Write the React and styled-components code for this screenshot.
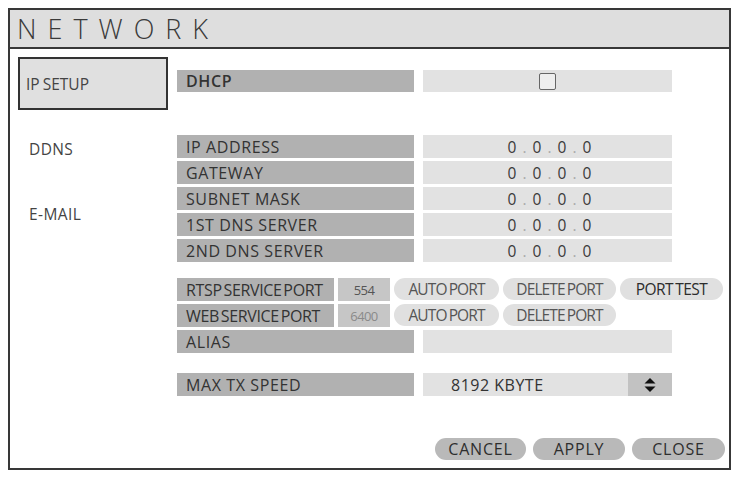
import React from "react";
import styled, { createGlobalStyle } from "styled-components";

const Global = createGlobalStyle`
  html, body { margin: 0; padding: 0; background: #fff; }
  body { font-family: "Open Sans", "Noto Sans", sans-serif; color: #333; }
`;

const Page = styled.div`
  padding: 8px;
`;

const Frame = styled.div`
  width: 723px;
  height: 462px;
  box-sizing: border-box;
  border: 2px solid #383838;
  display: flex;
  flex-direction: column;
  background: #fff;
`;

const TitleBar = styled.div`
  height: 37px;
  flex: none;
  background: #dedede;
  border-bottom: 2px solid #383838;
  display: flex;
  align-items: center;
  padding-left: 7px;
  font-size: 27px;
  font-weight: 300;
  letter-spacing: 11px;
  color: #3a3a3a;
`;

const Body = styled.div`
  flex: 1;
  display: flex;
`;

const Nav = styled.div`
  width: 150px;
  padding: 8px 0 0 8px;
  display: flex;
  flex-direction: column;
  gap: 12px;
`;

const NavItem = styled.div`
  height: 53px;
  box-sizing: border-box;
  display: flex;
  align-items: center;
  padding-left: ${(p) => (p.$active ? "6px" : "9px")};
  font-size: 15.5px;
  letter-spacing: ${(p) => (p.$active ? "0px" : "0.4px")};
  word-spacing: ${(p) => (p.$active ? "-1px" : "0")};
  color: #444;
  background: ${(p) => (p.$active ? "#e0e0e0" : "transparent")};
  border: 2px solid ${(p) => (p.$active ? "#333" : "transparent")};
`;

const Content = styled.div`
  flex: 1;
  margin-left: 9px;
  padding-top: 21px;
  display: flex;
  flex-direction: column;
`;

const Group = styled.div`
  display: flex;
  flex-direction: column;
  gap: ${(p) => p.$gap ?? 3}px;
  margin-top: ${(p) => p.$top ?? 0}px;
`;

const Row = styled.div`
  display: flex;
  height: ${(p) => p.$h ?? 23}px;
  gap: ${(p) => p.$gap ?? 9}px;
`;

const Label = styled.div`
  width: ${(p) => p.$w ?? 237}px;
  flex: none;
  background: #b1b1b1;
  display: flex;
  align-items: center;
  padding-left: 9px;
  box-sizing: border-box;
  font-size: 16px;
  letter-spacing: ${(p) => (p.$condensed ? "-0.35px" : "0.6px")};
  word-spacing: ${(p) => (p.$condensed ? "-2px" : "0")};
  font-weight: ${(p) => (p.$bold ? 600 : 400)};
  color: #333;
  white-space: nowrap;
`;

const Value = styled.div`
  width: 249px;
  flex: none;
  background: #e2e2e2;
  display: flex;
  align-items: center;
  justify-content: ${(p) => p.$justify ?? "center"};
  box-sizing: border-box;
  font-size: 15.5px;
  color: #3a3a3a;
`;

const Checkbox = styled.div`
  width: 15px;
  height: 15px;
  border: 1.5px solid #666;
  border-radius: 2px;
  background: #eee;
`;

const Ip = styled.span`
  letter-spacing: 0;
  margin-left: 4px;
`;

const Octet = styled.span`
  display: inline-block;
  width: 10px;
  text-align: center;
`;

const Dot = styled.span`
  display: inline-block;
  width: 15px;
  text-align: center;
  color: #aaa;
`;

const PortNum = styled.div`
  width: 52px;
  flex: none;
  background: #c6c6c6;
  display: flex;
  align-items: center;
  justify-content: center;
  font-size: 13px;
  letter-spacing: -0.6px;
  color: ${(p) => (p.$faint ? "#8a8a8a" : "#555")};
`;

const Pill = styled.div`
  width: ${(p) => p.$w}px;
  flex: none;
  height: 22px;
  border-radius: 11px;
  background: #e0e0e0;
  display: flex;
  align-items: center;
  justify-content: center;
  font-size: 15.5px;
  letter-spacing: ${(p) => (p.$dark ? "-0.6px" : "-0.9px")};
  word-spacing: -1px;
  color: ${(p) => (p.$dark ? "#2c2c2c" : "#555")};
  white-space: nowrap;
`;

const SpeedText = styled.span`
  flex: 1;
  padding-left: 28px;
  font-size: 16px;
  letter-spacing: 0.5px;
  color: #333;
`;

const Spinner = styled.div`
  width: 44px;
  align-self: stretch;
  background: #c2c2c2;
  display: flex;
  align-items: center;
  justify-content: center;
`;

const Footer = styled.div`
  margin-top: 42px;
  display: flex;
  justify-content: flex-end;
  gap: 7px;
  padding-right: 4px;
`;

const Button = styled.div`
  width: ${(p) => p.$w}px;
  height: 22px;
  border-radius: 11px;
  background: #b9b9b9;
  display: flex;
  align-items: center;
  justify-content: center;
  font-size: 16px;
  letter-spacing: 0.8px;
  color: #2e2e2e;
`;

const ipRows = ["IP ADDRESS", "GATEWAY", "SUBNET MASK", "1ST DNS SERVER", "2ND DNS SERVER"];

function IpValue() {
  return (
    <Ip>
      <Octet>0</Octet>
      <Dot>.</Dot>
      <Octet>0</Octet>
      <Dot>.</Dot>
      <Octet>0</Octet>
      <Dot>.</Dot>
      <Octet>0</Octet>
    </Ip>
  );
}

function UpDown() {
  return (
    <svg width="12" height="16" viewBox="0 0 12 16">
      <path d="M6 1 L11.5 6.5 H0.5 Z" fill="#111" />
      <path d="M6 15 L11.5 9.5 H0.5 Z" fill="#111" />
    </svg>
  );
}

export default function App() {
  return (
    <Page>
      <Global />
      <Frame>
        <TitleBar>NETWORK</TitleBar>
        <Body>
          <Nav>
            <NavItem $active>IP SETUP</NavItem>
            <NavItem>DDNS</NavItem>
            <NavItem>E-MAIL</NavItem>
          </Nav>
          <Content>
            <Row $h={22}>
              <Label $bold>DHCP</Label>
              <Value>
                <Checkbox />
              </Value>
            </Row>

            <Group $top={43}>
              {ipRows.map((name) => (
                <Row key={name}>
                  <Label>{name}</Label>
                  <Value>
                    <IpValue />
                  </Value>
                </Row>
              ))}
            </Group>

            <Group $top={16}>
              <Row $gap={4}>
                <Label $w={157} $condensed>RTSP SERVICE PORT</Label>
                <PortNum>554</PortNum>
                <Pill $w={105}>AUTO PORT</Pill>
                <Pill $w={113}>DELETE PORT</Pill>
                <Pill $w={103} $dark>PORT TEST</Pill>
              </Row>
              <Row $gap={4}>
                <Label $w={157} $condensed>WEB SERVICE PORT</Label>
                <PortNum $faint>6400</PortNum>
                <Pill $w={105}>AUTO PORT</Pill>
                <Pill $w={113}>DELETE PORT</Pill>
              </Row>
              <Row>
                <Label>ALIAS</Label>
                <Value />
              </Row>
            </Group>

            <Group $top={20}>
              <Row>
                <Label>MAX TX SPEED</Label>
                <Value $justify="flex-start">
                  <SpeedText>8192 KBYTE</SpeedText>
                  <Spinner>
                    <UpDown />
                  </Spinner>
                </Value>
              </Row>
            </Group>

            <Footer>
              <Button $w={91}>CANCEL</Button>
              <Button $w={92}>APPLY</Button>
              <Button $w={93}>CLOSE</Button>
            </Footer>
          </Content>
        </Body>
      </Frame>
    </Page>
  );
}
